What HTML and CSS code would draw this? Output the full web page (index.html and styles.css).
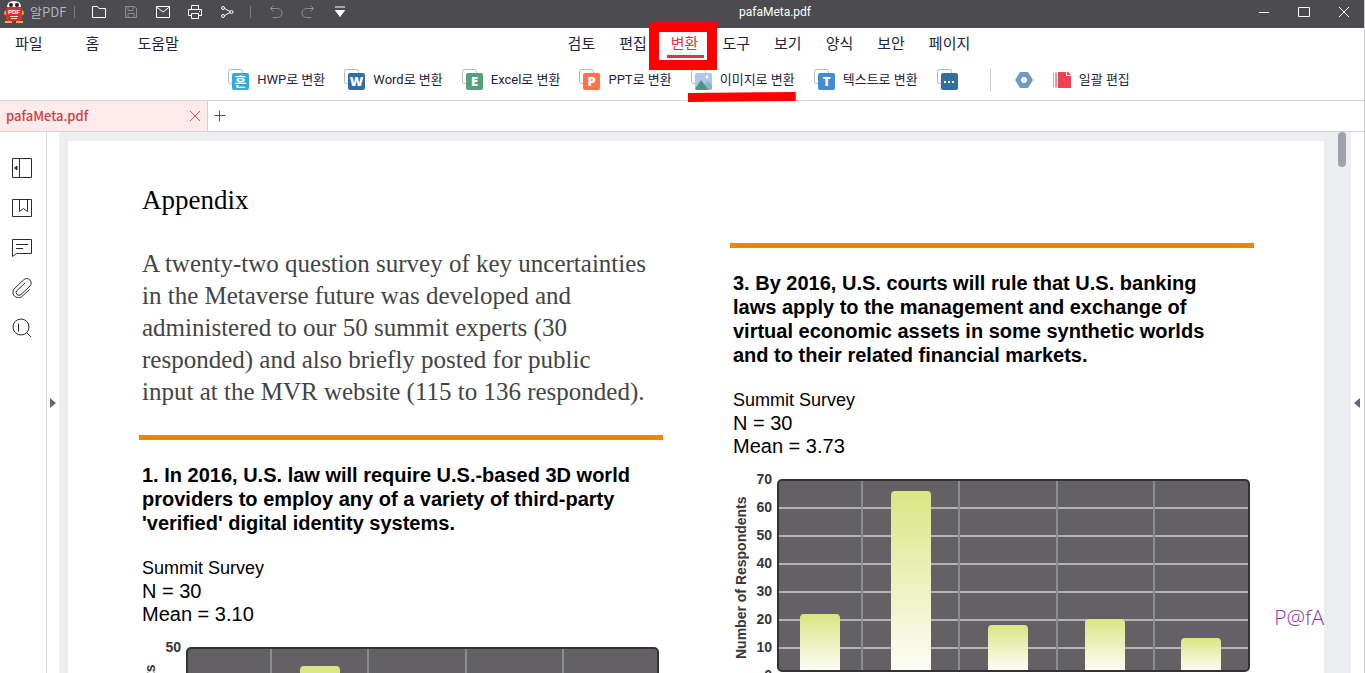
FILE: index.html
```html
<!DOCTYPE html>
<html lang="ko">
<head>
    <meta charset="UTF-8">
    <meta name="viewport" content="width=device-width, initial-scale=1.0">
    <title>pafaMeta.pdf - 알PDF</title>
    <link rel="stylesheet" href="styles.css">
</head>
<body>
    <header class="titlebar">
        <svg class="logo" width="20" height="22" viewBox="0 0 20 22">
            <path d="M2 9 Q0 10 0 13 L3 15 Z M18 9 Q20 10 20 13 L17 15 Z" fill="#e8b04a"/>
            <rect x="2" y="6" width="16" height="14" rx="3" fill="#d9302c"/>
            <path d="M3 6 Q3 0 10 0 Q17 0 17 6 Z" fill="#f7f7f7"/>
            <circle cx="7" cy="4" r="2" fill="#222"/>
            <circle cx="13" cy="4" r="2" fill="#222"/>
            <text x="10" y="13" class="logo-text">PDF</text>
            <path d="M6 15.500h8M7 17.500h6" stroke="#fff" stroke-width="0.800"/>
            <path d="M1 20h7v2H1zM12 20h7v2h-7z" fill="#e8b04a"/>
        </svg>
        <span class="app-name">알PDF</span>
        <span class="bar-line"></span>
        <div class="quick">
            <button aria-label="열기"><svg width="16" height="16" viewBox="0 0 16 16"><path d="M1.500 2.500h5l1.500 2h6.500v9h-13z"/></svg></button>
            <button class="off" aria-label="저장"><svg width="16" height="16" viewBox="0 0 16 16"><path d="M2.500 2.500h9l2 2v9h-11zM5 2.500v4h5v-4M5 13.500v-4h6v4"/></svg></button>
            <button aria-label="메일"><svg width="16" height="16" viewBox="0 0 16 16"><path d="M1.500 2.500h13v11h-13zM1.500 3l6.500 5 6.500-5"/></svg></button>
            <button aria-label="인쇄"><svg width="16" height="16" viewBox="0 0 16 16"><path d="M4.500 5.500v-4h7v4M4.500 11.500h-3v-6h13v6h-3M4.500 9.500h7v5h-7zM12 7.500h1"/></svg></button>
            <button aria-label="공유"><svg width="16" height="16" viewBox="0 0 16 16"><circle cx="4" cy="4" r="1.500"/><circle cx="4" cy="12" r="1.500"/><circle cx="12.500" cy="8" r="1.500"/><path d="M5.500 4.500l5.500 3M5.500 11.500l5.500-3"/></svg></button>
        </div>
        <span class="bar-line"></span>
        <div class="quick history">
            <button class="off" aria-label="실행 취소"><svg width="16" height="16" viewBox="0 0 16 16"><path d="M5.500 1.500l-3 3 3 3M2.500 4.500h7a4 4 0 0 1 0 9h-5"/></svg></button>
            <button class="off" aria-label="다시 실행"><svg width="16" height="16" viewBox="0 0 16 16"><path d="M10.500 1.500l3 3-3 3M13.500 4.500h-7a4 4 0 0 0 0 9h5"/></svg></button>
            <button aria-label="더 보기"><svg width="16" height="16" viewBox="0 0 16 16"><path d="M3 3h10M3.500 6.500h9L8 12.500z" fill="#fff"/></svg></button>
        </div>
        <div class="doc-title">pafaMeta.pdf</div>
        <div class="window-buttons">
            <button aria-label="최소화"><svg width="16" height="16" viewBox="0 0 16 16"><path d="M3 8.500h10"/></svg></button>
            <button aria-label="최대화"><svg width="16" height="16" viewBox="0 0 16 16"><path d="M2.500 3.500h11v9h-11z"/></svg></button>
            <button aria-label="닫기"><svg width="16" height="16" viewBox="0 0 16 16"><path d="M3 3l10 10M13 3L3 13"/></svg></button>
        </div>
    </header>

    <nav class="menu">
        <div class="menu-left">
            <button>파일</button>
            <button>홈</button>
            <button>도움말</button>
        </div>
        <div class="menu-main">
            <button>검토</button>
            <button>편집</button>
            <button class="active">변환</button>
            <button>도구</button>
            <button>보기</button>
            <button>양식</button>
            <button>보안</button>
            <button>페이지</button>
        </div>
    </nav>

    <div class="toolbar">
        <button>
            <svg width="21" height="22" viewBox="0 0 21 22"><rect class="back" x="0.500" y="0.500" width="14" height="14" rx="2"/><rect x="4" y="4" width="17" height="17" rx="2" fill="#35a9df"/><text x="12.500" y="17" class="mark ko">혼</text></svg>
            HWP로 변환
        </button>
        <button>
            <svg width="21" height="22" viewBox="0 0 21 22"><rect class="back" x="0.500" y="0.500" width="14" height="14" rx="2"/><rect x="4" y="4" width="17" height="17" rx="2" fill="#346da4"/><text x="12.500" y="17" class="mark">W</text></svg>
            Word로 변환
        </button>
        <button>
            <svg width="21" height="22" viewBox="0 0 21 22"><rect class="back" x="0.500" y="0.500" width="14" height="14" rx="2"/><rect x="4" y="4" width="17" height="17" rx="2" fill="#56a07c"/><text x="12.500" y="17" class="mark">E</text></svg>
            Excel로 변환
        </button>
        <button>
            <svg width="21" height="22" viewBox="0 0 21 22"><rect class="back" x="0.500" y="0.500" width="14" height="14" rx="2"/><rect x="4" y="4" width="17" height="17" rx="2" fill="#fb7548"/><text x="12.500" y="17" class="mark">P</text></svg>
            PPT로 변환
        </button>
        <button class="marked">
            <svg width="21" height="22" viewBox="0 0 21 22"><rect class="back" x="0.500" y="0.500" width="14" height="14" rx="2"/><rect x="4" y="4" width="17" height="17" rx="2" fill="#aec6ec"/><path d="M14 15l3-3 4 4v4l-3 1z" fill="#8fb4dc"/><path d="M4 20l6-9 8 10H5z" fill="#4f9a72"/><circle cx="16" cy="8" r="1.500" fill="#fff"/></svg>
            이미지로 변환
        </button>
        <button>
            <svg width="21" height="22" viewBox="0 0 21 22"><rect class="back" x="0.500" y="0.500" width="14" height="14" rx="2"/><rect x="4" y="4" width="17" height="17" rx="2" fill="#428bd6"/><text x="12.500" y="17" class="mark">T</text></svg>
            텍스트로 변환
        </button>
        <button aria-label="다른 형식으로 변환">
            <svg width="21" height="22" viewBox="0 0 21 22"><rect class="back" x="0.500" y="0.500" width="14" height="14" rx="2"/><rect x="4" y="4" width="17" height="17" rx="2" fill="#346da4"/><path d="M7 12h2v2H7zM11 12h2v2h-2zM15 12h2v2h-2z" fill="#fff"/></svg>
        </button>
        <span class="tool-line"></span>
        <button aria-label="설정">
            <svg width="18" height="18" viewBox="0 0 18 18"><path d="M5 1h8l5 8-5 8H5L0 9z" fill="#7199c4"/><circle cx="9" cy="9" r="3" fill="#fff"/></svg>
        </button>
        <button>
            <svg width="19" height="18" viewBox="0 0 19 18"><path d="M1.500 2v14" stroke="#f2909a"/><path d="M4 1.500v15" stroke="#f2707c" stroke-width="1.500"/><path d="M6 1h8v4h5v12H6z" fill="#ee4255"/><path d="M15 0l4 4h-4z" fill="#ee4255"/></svg>
            일괄 편집
        </button>
    </div>

    <div class="tabs">
        <div class="tab">
            <a href="#">pafaMeta.pdf</a>
            <button aria-label="탭 닫기"><svg width="12" height="12" viewBox="0 0 12 12"><path d="M1 1l10 10M11 1L1 11"/></svg></button>
        </div>
        <button class="new-tab" aria-label="새 탭"><svg width="12" height="12" viewBox="0 0 12 12"><path d="M0.500 5.500h11M5.500 0.500v11"/></svg></button>
    </div>

    <main class="work">
        <aside class="side">
            <button aria-label="패널"><svg width="20" height="20" viewBox="0 0 20 20"><path d="M0.500 0.500h19v19h-19zM7.500 0.500v19"/><path d="M5 8v4L2.500 10z" fill="#2b2b3c"/></svg></button>
            <button aria-label="책갈피"><svg width="20" height="20" viewBox="0 0 20 20"><path d="M0.500 1.500h19v17h-19zM7.500 1.500v12l4-3 4 3v-12"/></svg></button>
            <button aria-label="주석"><svg width="20" height="20" viewBox="0 0 20 20"><path d="M0.500 1.500h19v14h-15l-4 3zM4 6.500h12M4 10.500h7"/></svg></button>
            <button aria-label="첨부 파일"><svg width="20" height="20" viewBox="0 0 20 20"><path d="M17.500 11.500l-6.500 6a5.500 5.500 0 0 1-9-6.500l9.500-9a4.300 4.300 0 0 1 6.500 6l-9 8.500a2.700 2.700 0 0 1-4-4l8-7.500"/></svg></button>
            <button aria-label="찾기"><svg width="20" height="20" viewBox="0 0 20 20"><circle cx="9" cy="9" r="8"/><path d="M15 15l4 4M6.500 5.500v8"/></svg></button>
        </aside>
        <button class="fold" aria-label="왼쪽 패널 열기"><svg width="6" height="10" viewBox="0 0 6 10"><path d="M0 0l6 5-6 5z"/></svg></button>

        <section class="viewer">
            <article class="page">
                <div class="column">
                    <h1>Appendix</h1>
                    <p class="intro">A twenty-two question survey of key uncertainties<br>in the Metaverse future was developed and<br>administered to our 50 summit experts (30<br>responded) and also briefly posted for public<br>input at the MVR website (115 to 136 responded).</p>
                    <hr>
                    <h2>1. In 2016, U.S. law will require U.S.-based 3D world<br>providers to employ any of a variety of third-party<br>'verified' digital identity systems.</h2>
                    <p class="stats"><span>Summit Survey</span><br>N = 30<br>Mean = 3.10</p>
                    <div class="chart">
                        <div class="axis-title">Number of Respondents</div>
                        <div class="axis"><span>50</span><span>40</span><span>30</span><span>20</span><span>10</span><span>0</span></div>
                        <div class="plot by-five">
                            <div><i style="height: 84px"></i></div>
                            <div><i style="height: 172px"></i></div>
                            <div><i style="height: 96px"></i></div>
                            <div><i style="height: 72px"></i></div>
                            <div><i style="height: 40px"></i></div>
                        </div>
                    </div>
                </div>
                <div class="column second">
                    <hr>
                    <h2>3. By 2016, U.S. courts will rule that U.S. banking<br>laws apply to the management and exchange of<br>virtual economic assets in some synthetic worlds<br>and to their related financial markets.</h2>
                    <p class="stats"><span>Summit Survey</span><br>N = 30<br>Mean = 3.73</p>
                    <div class="chart">
                        <div class="axis-title">Number of Respondents</div>
                        <div class="axis"><span>70</span><span>60</span><span>50</span><span>40</span><span>30</span><span>20</span><span>10</span><span>0</span></div>
                        <div class="plot">
                            <div><i style="height: 56px"></i></div>
                            <div><i style="height: 179px"></i></div>
                            <div><i style="height: 45px"></i></div>
                            <div><i style="height: 51px"></i></div>
                            <div><i style="height: 32px"></i></div>
                        </div>
                    </div>
                </div>
            </article>
            <div class="thumb"></div>
            <div class="watermark">P@fA</div>
        </section>
        <button class="fold right" aria-label="오른쪽 패널 열기"><svg width="6" height="10" viewBox="0 0 6 10"><path d="M6 0L0 5l6 5z"/></svg></button>
    </main>
</body>
</html>
```
FILE: styles.css
```css
*, *::before, *::after {
    box-sizing: border-box;
}
body {
    margin: 0;
    height: 100vh;
    display: flex;
    flex-direction: column;
    overflow: hidden;
    font-family: "Noto Sans CJK KR", sans-serif;
    color: #23233c;
    background-color: #ffffff;
    border-right: 1px solid #cfcfd2;
}
button {
    margin: 0;
    padding: 0;
    border: none;
    background: none;
    font-family: inherit;
    color: inherit;
    cursor: pointer;
}
svg {
    display: block;
    flex: none;
    fill: none;
}

/* title bar */
.titlebar {
    display: flex;
    align-items: center;
    flex: none;
    height: 28px;
    padding: 0 12px 4px 4px;
    background-color: #4b4b50;
}
.titlebar button path, .titlebar button circle {
    stroke: #ffffff;
}
.titlebar .off path {
    stroke: #8d8d92;
}
.logo-text {
    font-family: "Liberation Sans", sans-serif;
    font-size: 6px;
    font-weight: bold;
    fill: #ffffff;
    text-anchor: middle;
}
.app-name {
    width: 43px;
    padding-left: 6px;
    font-size: 13px;
    line-height: 20px;
    color: #b4b4b8;
}
.bar-line {
    width: 1px;
    height: 12px;
    margin-left: 7px;
    background-color: #7c7c80;
}
.quick {
    display: flex;
    gap: 16px;
    margin-left: 16px;
}
.quick + .bar-line {
    margin-left: 15px;
}
.history {
    margin-left: 17px;
}
.doc-title {
    flex: 1;
    text-align: center;
    font-family: Roboto, sans-serif;
    font-size: 12px;
    line-height: 20px;
    color: #ffffff;
}
.window-buttons {
    display: flex;
    gap: 24px;
    padding-left: 54px;
}

/* menu */
.menu {
    display: flex;
    flex: none;
    height: 32px;
}
.menu button {
    position: relative;
    height: 29px;
    font-size: 15px;
}
.menu-left {
    display: flex;
    gap: 38px;
    padding-left: 15px;
}
.menu-left button:nth-child(2) {
    margin-left: 5px;
}
.menu-main {
    flex: 1;
    display: flex;
    justify-content: center;
    gap: 24px;
    padding-right: 5px;
}
.menu .active {
    color: #d9363e;
}
.menu .active::before {
    content: "";
    position: absolute;
    left: -4px;
    right: -6px;
    top: 27px;
    height: 3px;
    background-color: #d9363e;
}
.menu .active::after {
    content: "";
    position: absolute;
    z-index: 2;
    left: -22px;
    top: -6px;
    width: 68px;
    height: 48px;
    border: 10px solid #fe0000;
}

/* toolbar */
.toolbar {
    display: flex;
    justify-content: center;
    align-items: center;
    flex: none;
    gap: 19px;
    height: 41px;
    padding-right: 6px;
    border-bottom: 1px solid #d4d4d8;
}
.toolbar button {
    position: relative;
    display: flex;
    align-items: center;
    gap: 8px;
    font-family: Roboto, "Noto Sans CJK KR", sans-serif;
    font-size: 13px;
    line-height: 20px;
    white-space: nowrap;
}
.toolbar .back {
    stroke: #a9bcc0;
}
.mark {
    font-family: "Open Sans", sans-serif;
    font-size: 13px;
    font-weight: 800;
    fill: #ffffff;
    text-anchor: middle;
}
.mark.ko {
    font-family: "Noto Sans CJK KR", sans-serif;
    font-weight: 700;
}
.marked::after {
    content: "";
    position: absolute;
    z-index: 2;
    left: -3px;
    right: -1px;
    top: 23px;
    height: 10px;
    background-color: #fe0000;
    clip-path: polygon(0 1px, 100% 0, 100% 9px, 0 100%);
}
.tool-line {
    width: 1px;
    height: 24px;
    margin: 0 5px 0 13px;
    background-color: #d0d0d4;
}

/* document tabs */
.tabs {
    display: flex;
    align-items: stretch;
    flex: none;
    height: 31px;
    border-bottom: 1px solid #d4d4d8;
}
.tab {
    display: flex;
    align-items: center;
    justify-content: space-between;
    width: 208px;
    padding: 0 6px;
    background-color: #fdebeb;
    border-right: 1px solid #d4d4d8;
}
.tab a {
    font-size: 13px;
    font-weight: 500;
    line-height: 20px;
    color: #d63b3f;
    text-decoration: none;
}
.tab path {
    stroke: #d9534f;
}
.new-tab {
    padding: 0 6px;
}
.new-tab path {
    stroke: #55555c;
}

/* work area */
.work {
    flex: 1;
    display: flex;
    min-height: 0;
}
.side {
    display: flex;
    flex-direction: column;
    gap: 20px;
    width: 47px;
    padding: 26px 0 0 12px;
    border-right: 1px solid #dcdce2;
}
.side button {
    width: 20px;
    height: 20px;
}
.side path, .side circle {
    stroke: #2b2b3c;
}
.fold {
    width: 12px;
    padding-left: 3px;
}
.fold.right {
    width: 13px;
}
.fold path {
    fill: #66667a;
}
.viewer {
    position: relative;
    flex: 1;
    min-width: 0;
    overflow: hidden;
    padding: 9px 27px 0 9px;
    background-color: #edeef1;
}
.thumb {
    position: absolute;
    top: 0;
    right: 5px;
    width: 8px;
    height: 35px;
    border-radius: 4px;
    background-color: #a0a0ae;
}
.watermark {
    position: absolute;
    right: 27px;
    bottom: 42px;
    font-family: "Open Sans", sans-serif;
    font-size: 21px;
    line-height: 28px;
    font-weight: 300;
    color: #8a35b8;
}

/* pdf page */
.page {
    display: grid;
    grid-template-columns: minmax(0, 1fr) minmax(0, 1fr);
    gap: 67px;
    padding: 43px 70px 60px 71px;
    background-color: #ffffff;
    font-family: "Liberation Sans", Arial, sans-serif;
    color: #000000;
    white-space: nowrap;
}
.second {
    padding-top: 59px;
}
.page h1 {
    margin: 0 3px 32px;
    font-family: "Liberation Serif", serif;
    font-size: 27px;
    font-weight: normal;
    line-height: 32px;
}
.intro {
    margin: 0 3px 27px;
    font-family: "Liberation Serif", serif;
    font-size: 25px;
    line-height: 32px;
    color: #444444;
}
.page hr {
    height: 5px;
    margin: 0 0 23px;
    border: none;
    background-color: #f7820a;
}
.page h2 {
    margin: 0 3px 21px;
    font-size: 20px;
    line-height: 24px;
}
.stats {
    margin: 0 3px 21px;
    font-size: 20px;
    line-height: 23px;
}
.stats span {
    font-size: 18px;
}

/* charts */
.chart {
    display: flex;
    height: 193px;
    margin-right: 4px;
    font-size: 14px;
    font-weight: bold;
    line-height: 16px;
    color: #37373a;
}
.axis-title {
    writing-mode: vertical-rl;
    transform: rotate(180deg);
    width: 16px;
    margin: 17px 3px 0 3px;
    text-align: right;
}
.axis {
    display: flex;
    flex-direction: column;
    justify-content: space-between;
    width: 20px;
    height: 212px;
    margin-top: -8px;
    text-align: right;
}
.plot {
    --step: 28px;
    flex: 1;
    display: grid;
    grid-template-columns: 82fr 97fr 97fr 97fr 95fr;
    margin-left: 5px;
    border: 2px solid #333336;
    border-radius: 5px;
    background: repeating-linear-gradient(#636164 0, #636164 calc(var(--step) - 2px), #b4b4b6 calc(var(--step) - 2px), #b4b4b6 var(--step));
}
.plot.by-five {
    --step: 39px;
}
.plot div {
    display: flex;
    justify-content: center;
    align-items: flex-end;
}
.plot div + div {
    border-left: 2px solid #8b8d8f;
}
.plot i {
    width: 40px;
    border-radius: 4px 4px 0 0;
    background: linear-gradient(#d9e683, #fdfdf6);
}
```
